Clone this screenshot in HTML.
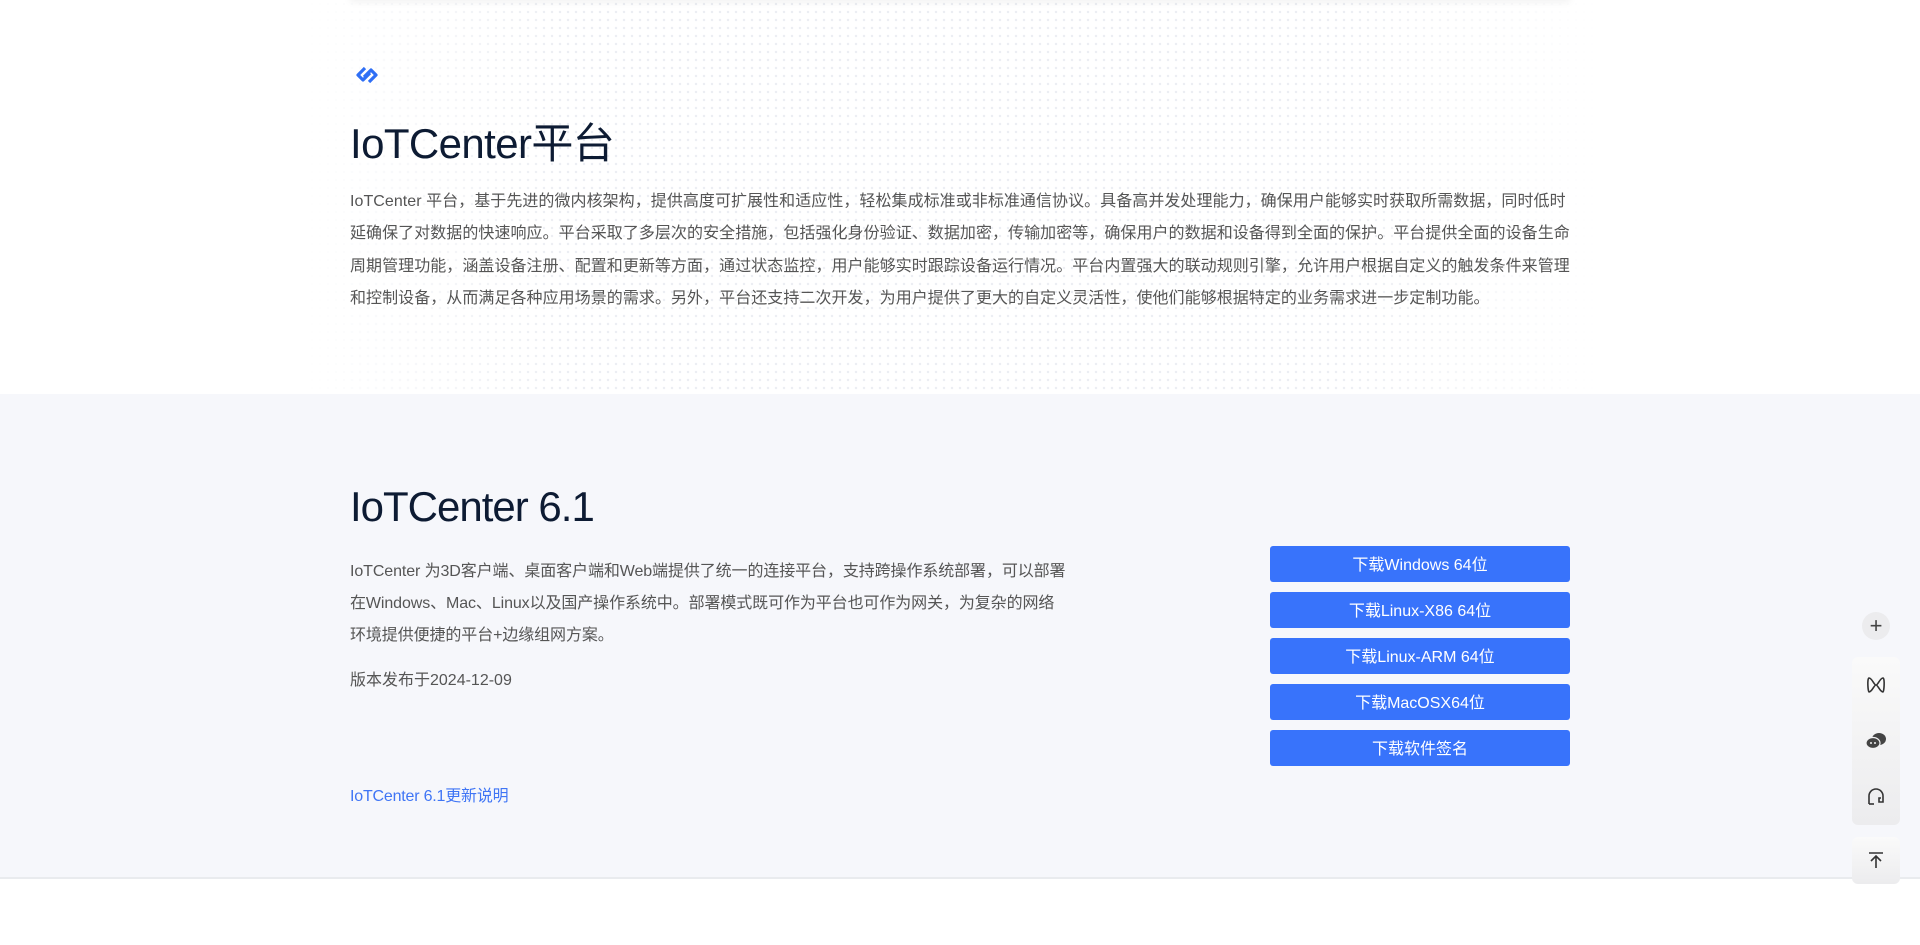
<!DOCTYPE html>
<html><head><meta charset="utf-8"><style>
*{margin:0;padding:0;box-sizing:border-box}
body{width:1920px;height:945px;overflow:hidden;background:#fff;font-family:"Liberation Sans","Noto Sans CJK SC",sans-serif;position:relative}
.dots{position:absolute;left:300px;top:0;width:1300px;height:394px;background-image:radial-gradient(circle,#eceef3 1.1px,transparent 1.4px);background-size:8px 8px;-webkit-mask-image:linear-gradient(90deg,transparent,#000 20%,#000 80%,transparent);}
.topsh{position:absolute;left:350px;top:-10px;width:1220px;height:10px;box-shadow:0 2px 8px rgba(0,0,0,.06)}
.sec1{position:absolute;left:350px;top:0;width:1220px}
h1{font-weight:400;color:#0d1b33;font-size:42px;letter-spacing:-0.6px;position:absolute;top:110px;left:0;white-space:nowrap}
.p1{position:absolute;top:186px;left:0;width:1220px;font-size:16px;line-height:32.4px;color:#555;letter-spacing:.05px}
.band{position:absolute;left:0;top:394px;width:1920px;height:485px;background:#f6f7fb;border-bottom:2px solid #e9ebee}
h2{position:absolute;left:350px;top:483px;font-weight:400;color:#0d1b33;font-size:42px;letter-spacing:-1px}
.p2{position:absolute;left:350px;top:556px;width:722px;font-size:16px;line-height:32px;color:#555;letter-spacing:-0.1px}
.ver{position:absolute;left:350px;top:666px;font-size:16px;color:#555}
.lnk{position:absolute;left:350px;top:782px;font-size:16px;color:#3f75f5;letter-spacing:-0.2px}
.btn{position:absolute;left:1270px;width:300px;height:36px;background:#3873fb;border-radius:3px;color:#fff;font-size:16px;text-align:center;line-height:36px;padding-top:2px}
.side{position:absolute;left:1852px;width:48px;background:linear-gradient(#fafafa,#ececee);border-radius:6px}
</style></head><body>
<div class="dots"></div>
<div class="topsh"></div>
<div class="sec1">
<svg style="position:absolute;left:2px;top:64px" width="30" height="22" viewBox="0 0 30 22"><g fill="none" stroke="#2f6ff5" stroke-width="3.2" stroke-linejoin="round"><path d="M13 4 L6 11 L11 16 L18 9"/><path d="M17 18 L24 11 L19 6 L12 13"/></g></svg>
<h1>IoTCenter平台</h1>
<p class="p1">IoTCenter 平台，基于先进的微内核架构，提供高度可扩展性和适应性，轻松集成标准或非标准通信协议。具备高并发处理能力，确保用户能够实时获取所需数据，同时低时延确保了对数据的快速响应。平台采取了多层次的安全措施，包括强化身份验证、数据加密，传输加密等，确保用户的数据和设备得到全面的保护。平台提供全面的设备生命周期管理功能，涵盖设备注册、配置和更新等方面，通过状态监控，用户能够实时跟踪设备运行情况。平台内置强大的联动规则引擎，允许用户根据自定义的触发条件来管理和控制设备，从而满足各种应用场景的需求。另外，平台还支持二次开发，为用户提供了更大的自定义灵活性，使他们能够根据特定的业务需求进一步定制功能。</p>
</div>
<div class="band"></div>
<h2>IoTCenter 6.1</h2>
<p class="p2">IoTCenter 为3D客户端、桌面客户端和Web端提供了统一的连接平台，支持跨操作系统部署，可以部署在Windows、Mac、Linux以及国产操作系统中。部署模式既可作为平台也可作为网关，为复杂的网络<br>环境提供便捷的平台+边缘组网方案。</p>
<div class="ver">版本发布于2024-12-09</div>
<div class="lnk">IoTCenter 6.1更新说明</div>
<div class="btn" style="top:546px">下载Windows 64位</div>
<div class="btn" style="top:592px">下载Linux-X86 64位</div>
<div class="btn" style="top:638px">下载Linux-ARM 64位</div>
<div class="btn" style="top:684px">下载MacOSX64位</div>
<div class="btn" style="top:730px">下载软件签名</div>
<div style="position:absolute;left:1862px;top:612px;width:28px;height:28px;border-radius:50%;background:#ececee;color:#444;font-size:22px;line-height:27px;text-align:center">+</div>
<div class="side" style="top:657px;height:168px">
<svg style="position:absolute;left:14px;top:18px" width="20" height="20" viewBox="0 0 20 20"><path d="M3 3 C6 3 8 10 10 10 C12 10 14 3 17 3 C19 3 18 17 17 17 C14 17 12 10 10 10 C8 10 6 17 3 17 C2 17 1 3 3 3Z" fill="none" stroke="#333" stroke-width="1.6"/></svg>
<svg style="position:absolute;left:13px;top:75px" width="22" height="18" viewBox="0 0 22 18"><ellipse cx="14" cy="7" rx="7" ry="6" fill="#444"/><ellipse cx="8" cy="11" rx="7" ry="5.5" fill="#444" stroke="#f2f2f3" stroke-width="1.2"/><circle cx="6" cy="11" r="1" fill="#f2f2f3"/><circle cx="10" cy="11" r="1" fill="#f2f2f3"/></svg>
<svg style="position:absolute;left:14px;top:130px" width="20" height="20" viewBox="0 0 20 20"><path d="M3 17 V9 A7 7 0 0 1 17 9 V15 H13 V11 H15" fill="none" stroke="#333" stroke-width="1.6"/><path d="M3 17 H8" stroke="#333" stroke-width="1.6"/></svg>
</div>
<div class="side" style="top:837px;height:47px">
<svg style="position:absolute;left:15px;top:14px" width="18" height="18" viewBox="0 0 18 18"><path d="M2 2 H16 M9 5 V17 M4 10 L9 5 L14 10" fill="none" stroke="#333" stroke-width="1.6"/></svg>
</div>
</body></html>
